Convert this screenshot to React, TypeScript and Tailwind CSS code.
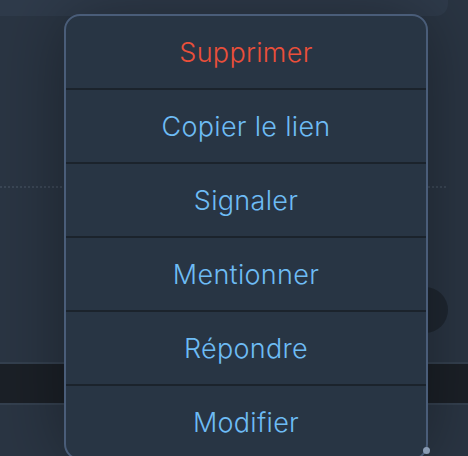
import React from "react"

const items = [
  { label: "Supprimer", danger: true },
  { label: "Copier le lien" },
  { label: "Signaler" },
  { label: "Mentionner" },
  { label: "Répondre" },
  { label: "Modifier" },
]

export default function App() {
  return (
    <div className="relative h-[456px] w-[468px] overflow-hidden bg-[#2a3543] font-['Inter','Noto_Sans',sans-serif]">
      {/* background content behind the menu */}
      <div className="flex flex-col">
        <div className="h-[16px] w-[448px] rounded-br-[12px] bg-[#2f3b4b]" />
        <div className="mt-[170px] h-[2px] w-[448px] bg-[repeating-linear-gradient(90deg,#3b4756_0_2px,transparent_2px_4px)]" />
        <div className="mt-[99px] ml-[402px] size-[46px] rounded-full bg-[#1f2731]" />
        <div className="mt-[29px] h-[43px] w-full border-y-2 border-[#34404f] bg-[#1b2027]" />
      </div>

      {/* context menu */}
      <div className="absolute top-[14px] left-[64px] w-[364px] overflow-hidden rounded-[16px] border-2 border-[#4a5d79] bg-[#283544] shadow-[0_0_70px_rgba(0,0,0,0.35)]">
        {items.map((item, i) => (
          <div
            key={item.label}
            className={
              "flex items-center justify-center text-[27px] font-light tracking-[0.3px] leading-none " +
              (item.danger ? "text-[#ea4f3a]" : "text-[#6ebcf5]") +
              (i > 0 ? " h-[74px] border-t-2 border-[#1b232c]" : " h-[72px]")
            }
          >
            {item.label}
          </div>
        ))}
      </div>
      <div className="absolute top-[447px] left-[423px] size-[7px] rounded-full bg-[#8a9cb4]" />
    </div>
  )
}
